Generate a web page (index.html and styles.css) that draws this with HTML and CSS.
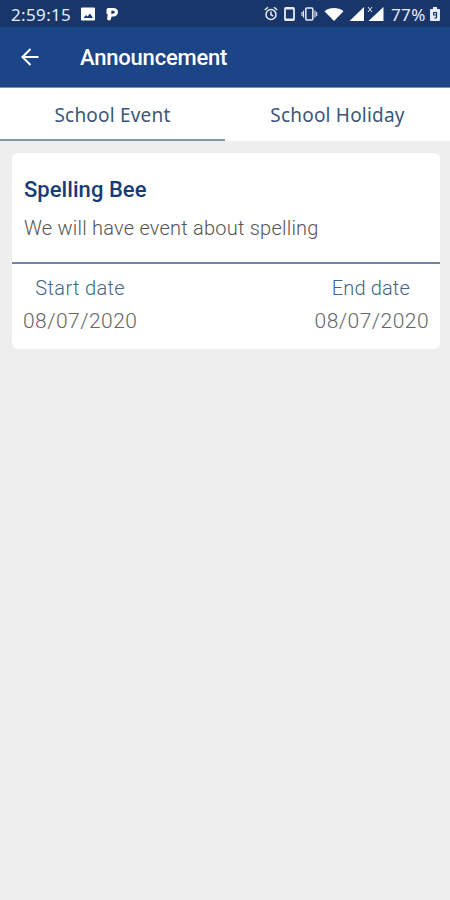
FILE: index.html
```html
<!DOCTYPE html>
<html lang="en">
<head>
<meta charset="utf-8">
<title>Announcement</title>
<link rel="stylesheet" href="styles.css">
</head>
<body>
<div class="status">
  <span class="clock">2:59:15</span>
  <svg class="notif" width="38" height="14" viewBox="0 0 38 14" fill="#fff">
    <path fill-rule="evenodd" d="M1 0.5h12a1 1 0 0 1 1 1v11a1 1 0 0 1-1 1H1a1 1 0 0 1-1-1v-11a1 1 0 0 1 1-1zM2.500 11h9.500L9 6.500 6.500 9.500 5 8z"/>
    <path fill-rule="evenodd" d="M27 1h5c3 0 5 1.500 5 4s-2 4.500-5 4.500h-1.500c-.3 2.500-1 4-2.500 4-1.300 0-2-1-1.800-2.500L26.700 7H25.500V3c0-1 .5-2 1.500-2zM30.500 3.700l-.4 3h1.700c1.200 0 1.900-.7 1.900-1.600 0-.9-.7-1.400-1.700-1.400z"/>
  </svg>
  <svg class="system" width="122" height="18" viewBox="0 0 122 18" fill="none" stroke="#e6ebf5" stroke-width="1.500">
    <circle cx="8" cy="9.500" r="5"/><path d="M8 6.500v3.300l2.200 1.200M1.800 5L5 2.300M14.200 5L11 2.300"/>
    <rect x="22" y="2.800" width="9" height="12.400" rx="1" stroke-width="1.800"/><path d="M22 3.500h9M22 14.500h9" stroke-width="2.200"/>
    <rect x="42.800" y="3" width="7" height="12" rx="1"/><path d="M40.500 5.500v7M52 5.500v7M39 7v4M53.700 7v4" stroke-width="1.100"/>
    <g fill="#fff" stroke="none"><path d="M61.500 6.300c5-4.400 14-4.400 19 0L71 16z"/><path d="M101 2v14H86.500zM120.500 2v14h-15z"/></g>
    <path d="M105 2l4 5M109 2l-4 5" stroke-width="1"/>
  </svg>
  <span class="percent">77%</span>
  <svg class="battery" width="10" height="14" viewBox="0 0 10 14">
    <path fill="#e6ebf5" d="M3 0h4v2h2a1 1 0 0 1 1 1v10a1 1 0 0 1-1 1H1a1 1 0 0 1-1-1V3a1 1 0 0 1 1-1h2z"/>
    <path fill="none" stroke="#19366b" stroke-width="1.200" d="M6.500 8H3.700V5.500h2.800v5l-2 .8"/>
  </svg>
</div>
<header class="bar">
  <svg class="back" width="18" height="18" viewBox="0 0 18 18" fill="none" stroke="#fff" stroke-width="2"><path d="M17.500 9H2M9.500 1L1.500 9l8 8"/></svg>
  <h1 class="title">Announcement</h1>
</header>
<nav class="tabs">
  <div class="tab active"><span>School Event</span></div>
  <div class="tab"><span>School Holiday</span></div>
</nav>
<main class="card">
  <section class="info">
    <h2 class="name">Spelling Bee</h2>
    <p class="desc">We will have event about spelling</p>
  </section>
  <section class="dates">
    <div class="date"><span class="label">Start date</span><span class="value">08/07/2020</span></div>
    <div class="date"><span class="label end">End date</span><span class="value">08/07/2020</span></div>
  </section>
</main>
</body>
</html>
```
FILE: styles.css
```css
* { box-sizing: border-box; }
body { margin: 0; min-height: 900px; background: #eee; font-family: "Noto Sans", sans-serif; white-space: nowrap; }
h1, h2, p { margin: 0; }
svg { flex: none; display: block; }
.status { height: 27px; display: flex; align-items: center; padding: 1px 10px 0 11px; background: #19366b; color: #e6ebf5; font-size: 17px; }
.clock { width: 70px; letter-spacing: .35px; }
.system { margin-left: 144px; }
.percent { margin-left: 6px; width: 37px; letter-spacing: .4px; }
.battery { margin-left: 2px; }
.bar { height: 61px; display: flex; align-items: center; padding: 0 0 0 21px; background: #1c4587; border-bottom: 1px solid #7890b4; color: #fff; }
.title { margin-left: 41px; padding-top: 2px; font: 500 22px/30px Roboto, sans-serif; letter-spacing: -.2px; }
.tabs { height: 53px; display: flex; background: #fff; color: #3b5679; font-size: 19px; letter-spacing: .2px; }
.tab { flex: 1; display: flex; align-items: center; justify-content: center; border-bottom: 3px solid transparent; padding-top: 3px; }
.active { border-bottom: 2px solid #8397a9; padding-top: 2px; }
.card { margin: 12px 10px 0 12px; height: 196px; background: #fff; border-radius: 6px; font-family: Roboto, sans-serif; }
.info { height: 111px; padding: 22px 12px 0; border-bottom: 2px solid #70869f; }
.name { font-size: 22px; line-height: 30px; font-weight: 500; color: #193b79; letter-spacing: .05px; }
.desc { margin-top: 9px; font-size: 20px; line-height: 28px; font-weight: 300; color: #555; letter-spacing: .22px; }
.dates { display: flex; justify-content: space-between; padding: 8px 11px 0; }
.date { display: flex; flex-direction: column; align-items: center; }
.label { font-size: 20px; line-height: 33px; color: #456487; font-weight: 300; letter-spacing: .35px; }
.end { margin-right: 2px; letter-spacing: .15px; }
.value { font-size: 21px; line-height: 33px; color: #666; font-weight: 300; letter-spacing: .45px; }
```
